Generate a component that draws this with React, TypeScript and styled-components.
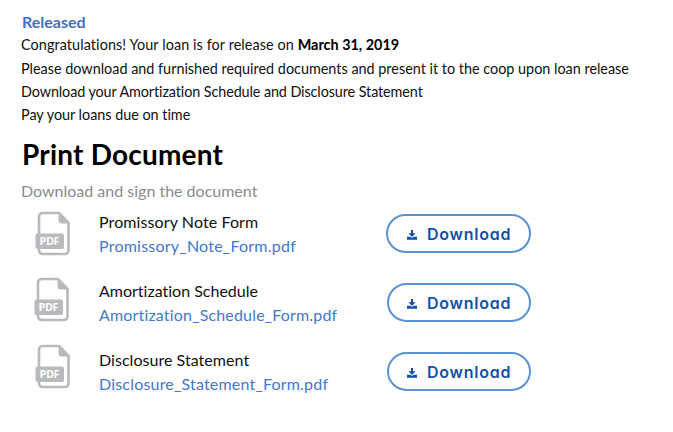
import styled, { createGlobalStyle } from "styled-components";

const GlobalStyle = createGlobalStyle`
  * { box-sizing: border-box; }
  body { margin: 0; background: #fff; }
`;

const Page = styled.main`
  width: 673px;
  height: 432px;
  padding: 10px 0 0 21px;
  overflow: hidden;
  background: #fff;
  color: #111;
  font-family: Lato, "Open Sans", sans-serif;
  font-variant-ligatures: none;
  white-space: nowrap;
`;

const Status = styled.h2`
  margin: 0 0 0 1px;
  font-size: 16px;
  line-height: 23px;
  font-weight: 700;
  color: #3f6fc6;
`;

const Messages = styled.div`
  display: flex;
  flex-direction: column;
  height: 102px;
`;

const Message = styled.p<{ $spacing?: number; $gap?: number }>`
  margin: 0 0 ${(p) => p.$gap ?? 0}px;
  font-size: 14.4px;
  line-height: 23px;
  letter-spacing: ${(p) => p.$spacing ?? 0}px;

  strong {
    color: #000;
    letter-spacing: 0;
  }
`;

const Title = styled.h1`
  margin: 0 0 0 1px;
  font-size: 28px;
  line-height: 38px;
  font-weight: 700;
  letter-spacing: 0.2px;
  color: #000;
`;

const Hint = styled.p`
  margin: 6px 0 0;
  font-size: 16px;
  line-height: 24px;
  color: #8b8b8b;
`;

const DocumentList = styled.ul`
  margin: 6px 0 0;
  padding: 0;
  list-style: none;
`;

const DocumentRow = styled.li`
  display: grid;
  grid-template-columns: 78px 287px 146px;
  height: 69px;
  align-items: start;
`;

const FileIcon = styled.svg<{ $top: number; $left: number }>`
  display: block;
  width: 36px;
  height: 45px;
  margin: ${(p) => p.$top}px 0 0 ${(p) => p.$left}px;
`;

const DocumentText = styled.div`
  display: flex;
  flex-direction: column;
  margin-top: 1px;
  font-size: 16px;
`;

const DocumentName = styled.span<{ $spacing: number }>`
  line-height: 24px;
  letter-spacing: ${(p) => p.$spacing}px;
`;

const DocumentLink = styled.a<{ $spacing: number }>`
  line-height: 23px;
  letter-spacing: ${(p) => p.$spacing}px;
  color: #4577cc;
`;

const DownloadButton = styled.button<{ $inset: number }>`
  display: flex;
  align-items: center;
  width: ${(p) => 145 - p.$inset}px;
  height: 39px;
  margin: 5px 0 0 ${(p) => p.$inset}px;
  padding: 0 0 0 ${(p) => 19 - p.$inset}px;
  border: 2px solid #5b92cf;
  border-radius: 20px;
  background: #fff;
  color: #1450a8;
  font-family: Inter, sans-serif;
  font-size: 16px;
  font-weight: 600;
  font-feature-settings: "cv11";
  letter-spacing: 0.75px;
`;

const DownloadGlyph = styled.svg`
  width: 10px;
  height: 10px;
  margin: 3px 10px 0 0;
`;

const documents = [
  { name: "Promissory Note Form", file: "Promissory_Note_Form.pdf", nameSpacing: 0.1, fileSpacing: 0.23, iconTop: 2, iconLeft: 14, inset: 0 },
  { name: "Amortization Schedule", file: "Amortization_Schedule_Form.pdf", nameSpacing: 0, fileSpacing: 0.17, iconTop: -1, iconLeft: 13, inset: 1 },
  { name: "Disclosure Statement", file: "Disclosure_Statement_Form.pdf", nameSpacing: 0.04, fileSpacing: 0.19, iconTop: -3, iconLeft: 14, inset: 1 },
];

function PdfIcon({ top, left }: { top: number; left: number }) {
  return (
    <FileIcon $top={top} $left={left} viewBox="0 0 36 45" fill="none" aria-hidden="true">
      <path d="M4 23V6Q4 2 8 2H24L33.5 12V39Q33.5 43 29.5 43H8Q4 43 4 39V37" stroke="#b9babe" strokeWidth="2.6" strokeLinejoin="round" />
      <path d="M23.5 1.5L34.5 12.5H27Q23.5 12.5 23.5 9Z" fill="#b9babe" />
      <rect x="0.5" y="22.5" width="28.5" height="15.5" rx="2" fill="#b9babe" />
      <text x="14.5" y="34.2" textAnchor="middle" fill="#fff" fontFamily="Open Sans, sans-serif" fontSize="10.8" fontWeight="700" textLength="20">
        PDF
      </text>
    </FileIcon>
  );
}

export default function App() {
  return (
    <>
      <GlobalStyle />
      <Page>
        <Status>Released</Status>
        <Messages>
          <Message $spacing={0.09} $gap={1}>
            Congratulations! Your loan is for release on <strong>March 31, 2019</strong>
          </Message>
          <Message>
            Please download and furnished required documents and present it to the coop upon loan release
          </Message>
          <Message $spacing={-0.1}>Download your Amortization Schedule and Disclosure Statement</Message>
          <Message $spacing={-0.02}>Pay your loans due on time</Message>
        </Messages>
        <Title>Print Document</Title>
        <Hint>Download and sign the document</Hint>
        <DocumentList>
          {documents.map((d) => (
            <DocumentRow key={d.file}>
              <PdfIcon top={d.iconTop} left={d.iconLeft} />
              <DocumentText>
                <DocumentName $spacing={d.nameSpacing}>{d.name}</DocumentName>
                <DocumentLink $spacing={d.fileSpacing}>{d.file}</DocumentLink>
              </DocumentText>
              <DownloadButton $inset={d.inset} type="button">
                <DownloadGlyph viewBox="0 0 10 10" fill="currentColor" aria-hidden="true">
                  <path d="M4 0H6V3.3H8.6L5 6.9L1.4 3.3H4ZM0 6.7H3.3L5 8.1L6.7 6.7H10V9.7H0Z" />
                </DownloadGlyph>
                Download
              </DownloadButton>
            </DocumentRow>
          ))}
        </DocumentList>
      </Page>
    </>
  );
}
